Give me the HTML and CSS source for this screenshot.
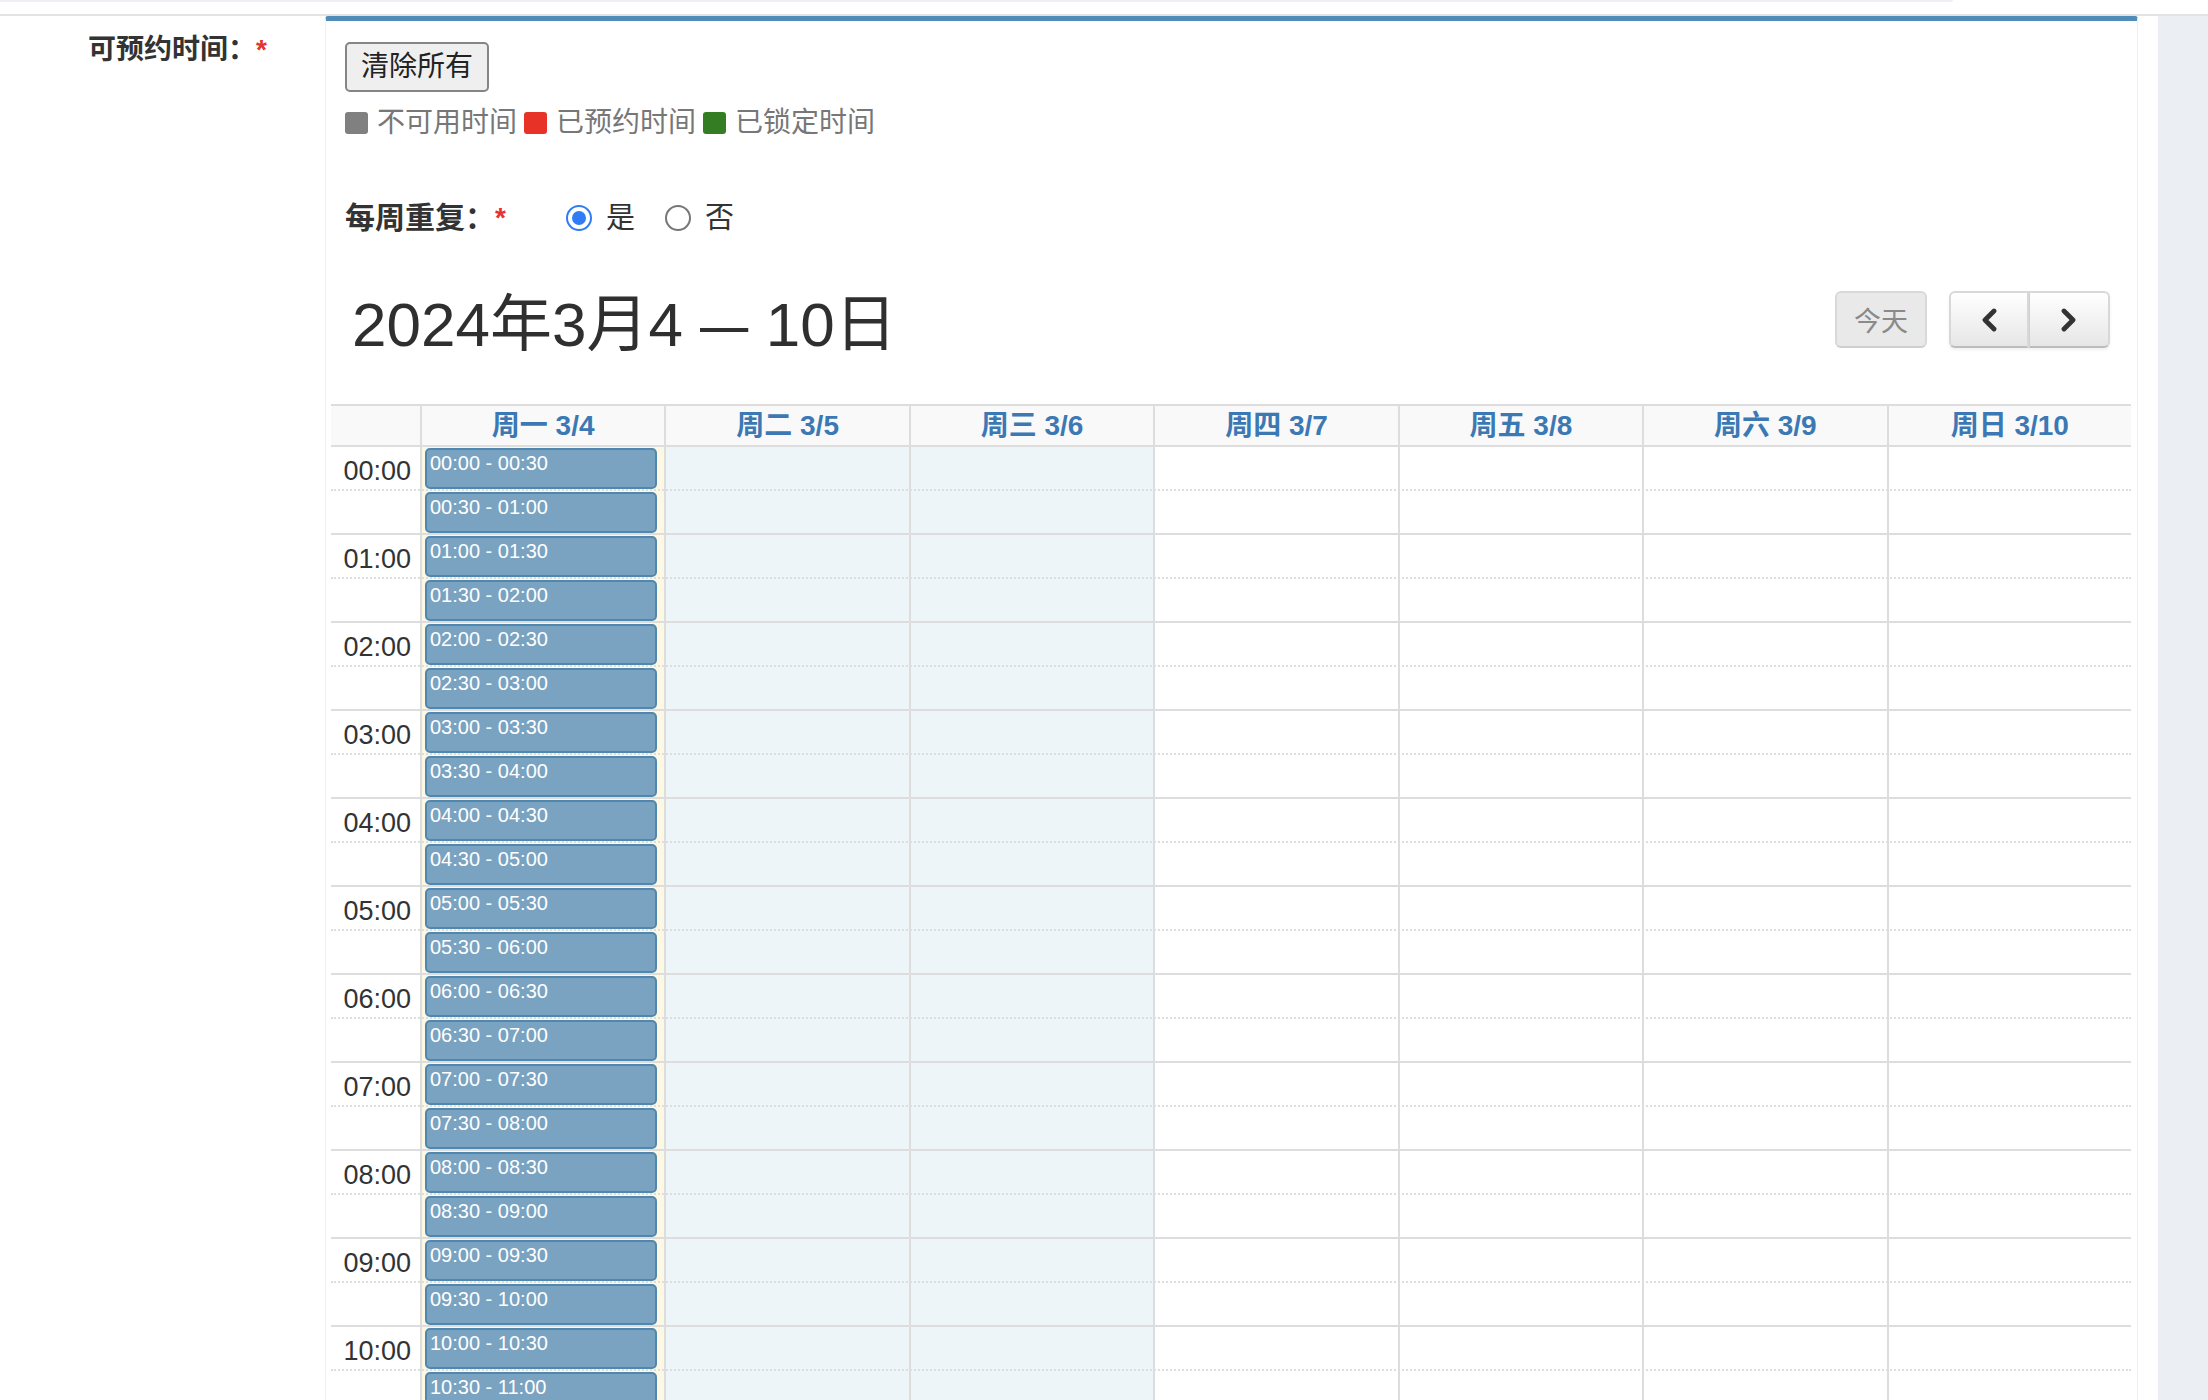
FILE: index.html
```html
<!DOCTYPE html>
<html lang="zh-CN">
<head>
<meta charset="utf-8">
<title>可预约时间</title>
<link rel="stylesheet" href="styles.css">
</head>
<body>
<div class="page">
  <div class="topband"></div>
  <div class="rule"></div>
  <div class="main">
    <div class="form-row">
      <div class="field-label">可预约时间：<span class="req">*</span></div>
      <div class="panel">
        <div class="controls">
          <button class="btn-clear" type="button">清除所有</button>
          <div class="legend">
            <span class="legend-item"><span class="swatch sw-gray"></span>不可用时间</span>
            <span class="legend-item"><span class="swatch sw-red"></span>已预约时间</span>
            <span class="legend-item"><span class="swatch sw-green"></span>已锁定时间</span>
          </div>
          <div class="repeat-row">
            <span class="repeat-label">每周重复：</span><span class="req req-sm">*</span>
            <label class="radio first"><span class="radio-dot checked"></span>是</label>
            <label class="radio"><span class="radio-dot"></span>否</label>
          </div>
        </div>

        <div class="calendar">
          <div class="toolbar">
            <h2 class="title">2024年3月4 <span class="dash">–</span> 10日</h2>
            <div class="tb-right">
              <button class="fc-btn today" type="button" disabled>今天</button>
              <div class="btn-group">
                <button class="fc-btn nav prev" type="button"><svg width="18" height="24" viewBox="0 0 18 24"><polyline points="14,3 5,12 14,21" fill="none" stroke="#333" stroke-width="4.8" stroke-linecap="round" stroke-linejoin="round"/></svg></button>
                <button class="fc-btn nav next" type="button"><svg width="18" height="24" viewBox="0 0 18 24"><polyline points="4,3 13,12 4,21" fill="none" stroke="#333" stroke-width="4.8" stroke-linecap="round" stroke-linejoin="round"/></svg></button>
              </div>
            </div>
          </div>

          <div class="grid">
            <div class="head">
              <div class="head-axis"></div>
              <div class="head-day">周一 3/4</div>
              <div class="head-day">周二 3/5</div>
              <div class="head-day">周三 3/6</div>
              <div class="head-day">周四 3/7</div>
              <div class="head-day">周五 3/8</div>
              <div class="head-day">周六 3/9</div>
              <div class="head-day">周日 3/10</div>
            </div>
            <div class="body">
              <div class="bg-cols">
                <div class="bg-axis"></div>
                <div class="bg-day today"></div>
                <div class="bg-day shaded"></div>
                <div class="bg-day shaded"></div>
                <div class="bg-day"></div>
                <div class="bg-day"></div>
                <div class="bg-day"></div>
                <div class="bg-day"></div>
              </div>
              <div class="slats">
                <div class="slat"><div class="slat-axis">00:00</div></div>
                <div class="slat half"><div class="slat-axis"></div></div>
                <div class="slat"><div class="slat-axis">01:00</div></div>
                <div class="slat half"><div class="slat-axis"></div></div>
                <div class="slat"><div class="slat-axis">02:00</div></div>
                <div class="slat half"><div class="slat-axis"></div></div>
                <div class="slat"><div class="slat-axis">03:00</div></div>
                <div class="slat half"><div class="slat-axis"></div></div>
                <div class="slat"><div class="slat-axis">04:00</div></div>
                <div class="slat half"><div class="slat-axis"></div></div>
                <div class="slat"><div class="slat-axis">05:00</div></div>
                <div class="slat half"><div class="slat-axis"></div></div>
                <div class="slat"><div class="slat-axis">06:00</div></div>
                <div class="slat half"><div class="slat-axis"></div></div>
                <div class="slat"><div class="slat-axis">07:00</div></div>
                <div class="slat half"><div class="slat-axis"></div></div>
                <div class="slat"><div class="slat-axis">08:00</div></div>
                <div class="slat half"><div class="slat-axis"></div></div>
                <div class="slat"><div class="slat-axis">09:00</div></div>
                <div class="slat half"><div class="slat-axis"></div></div>
                <div class="slat"><div class="slat-axis">10:00</div></div>
                <div class="slat half"><div class="slat-axis"></div></div>
                <div class="slat"><div class="slat-axis">11:00</div></div>
                <div class="slat half"><div class="slat-axis"></div></div>
              </div>
              <div class="ev-cols">
                <div class="ev-axis"></div>
                <div class="ev-col">
                  <div class="event">00:00 - 00:30</div>
                  <div class="event">00:30 - 01:00</div>
                  <div class="event">01:00 - 01:30</div>
                  <div class="event">01:30 - 02:00</div>
                  <div class="event">02:00 - 02:30</div>
                  <div class="event">02:30 - 03:00</div>
                  <div class="event">03:00 - 03:30</div>
                  <div class="event">03:30 - 04:00</div>
                  <div class="event">04:00 - 04:30</div>
                  <div class="event">04:30 - 05:00</div>
                  <div class="event">05:00 - 05:30</div>
                  <div class="event">05:30 - 06:00</div>
                  <div class="event">06:00 - 06:30</div>
                  <div class="event">06:30 - 07:00</div>
                  <div class="event">07:00 - 07:30</div>
                  <div class="event">07:30 - 08:00</div>
                  <div class="event">08:00 - 08:30</div>
                  <div class="event">08:30 - 09:00</div>
                  <div class="event">09:00 - 09:30</div>
                  <div class="event">09:30 - 10:00</div>
                  <div class="event">10:00 - 10:30</div>
                  <div class="event">10:30 - 11:00</div>
                  <div class="event">11:00 - 11:30</div>
                  <div class="event">11:30 - 12:00</div>
                </div>
              </div>
            </div>
          </div>
        </div>
      </div>
    </div>
    <div class="sidebar"></div>
  </div>
</div>
</body>
</html>
```

FILE: styles.css
```css
html, body {
  margin: 0;
  padding: 0;
  height: 1400px;
  overflow: hidden;
  background: #fff;
}
body {
  font-family: "Liberation Sans", "Noto Sans CJK SC", sans-serif;
  color: #333;
}
.page {
  width: 2208px;
  height: 1400px;
  overflow: hidden;
}
.topband {
  width: 1953px;
  height: 2px;
  background: #eceff3;
  border-bottom-right-radius: 3px;
}
.rule {
  margin-top: 12px;
  height: 2px;
  background: #e3e3e3;
}
.main {
  display: flex;
  height: 1384px;
}
.form-row {
  display: flex;
  width: 2158px;
  flex: none;
}
.sidebar {
  flex: 1;
  background: #ebeef3;
}
.field-label {
  width: 325px;
  flex: none;
  box-sizing: border-box;
  text-align: right;
  padding: 18px 58px 0 0;
  font-size: 28px;
  line-height: 32px;
  font-weight: bold;
  color: #333;
  white-space: nowrap;
}
.req {
  color: #e3342f;
  font-weight: bold;
}
.panel {
  width: 1813px;
  flex: none;
  box-sizing: border-box;
  border-top: 5px solid #508cb9;
  border-left: 1px solid #f1f1f1;
  border-right: 1px solid #f1f1f1;
  border-radius: 3px 3px 0 0;
  padding: 21px 6px 0 5px;
}
.controls {
  margin-left: 14px;
}
.btn-clear {
  display: block;
  height: 50px;
  padding: 0 14px;
  font-family: "Liberation Sans", "Noto Sans CJK SC", sans-serif;
  font-size: 28px;
  line-height: 30px;
  color: #222;
  background: #efefef;
  border: 2px solid #858585;
  border-radius: 5px;
}
.legend {
  margin-top: 16px;
  height: 30px;
  display: flex;
  align-items: center;
  font-size: 28px;
  line-height: 30px;
  color: #777;
}
.legend-item {
  display: inline-flex;
  align-items: center;
  gap: 9px;
  margin-right: 7px;
}
.swatch {
  width: 23px;
  height: 22px;
  border-radius: 3px;
  display: inline-block;
}
.sw-gray { background: #808080; }
.sw-red { background: #e73327; }
.sw-green { background: #357d22; }

.repeat-row {
  margin-top: 60px;
  height: 40px;
  display: flex;
  align-items: center;
  font-size: 29px;
  line-height: 40px;
  color: #333;
}
.repeat-label {
  font-size: 30px;
  font-weight: bold;
  white-space: nowrap;
}
.req-sm {
  font-size: 28px;
}
.radio {
  display: inline-flex;
  align-items: center;
  gap: 14px;
  margin-left: 30px;
}
.radio.first {
  margin-left: 60px;
}
.radio-dot {
  width: 26px;
  height: 26px;
  box-sizing: border-box;
  border: 2px solid #767676;
  border-radius: 50%;
  background: #fff;
  display: inline-flex;
  align-items: center;
  justify-content: center;
}
.radio-dot.checked {
  border-color: #2f7cf6;
}
.radio-dot.checked::after {
  content: "";
  width: 14px;
  height: 14px;
  border-radius: 50%;
  background: #2f7cf6;
}

.toolbar {
  margin-top: 53px;
  height: 57px;
  display: flex;
  justify-content: space-between;
  align-items: flex-start;
  padding: 0 21px 0 21px;
}
.title {
  margin: 4px 0 0;
  font-size: 62px;
  line-height: 60px;
  font-weight: normal;
  color: #2f2f2f;
  white-space: nowrap;
}
.dash {
  display: inline-block;
  margin: 0 7px;
  transform: scaleX(1.4);
}
.tb-right {
  display: flex;
  gap: 22px;
}
.fc-btn {
  height: 57px;
  box-sizing: border-box;
  font-family: "Liberation Sans", "Noto Sans CJK SC", sans-serif;
  padding: 0;
  margin: 0;
}
.fc-btn.today {
  width: 92px;
  font-size: 27px;
  color: #8a8a8a;
  background: #e9e9e9;
  border: 2px solid #d9d9d9;
  border-bottom-color: #cfcfcf;
  border-radius: 6px;
}
.btn-group {
  display: flex;
  border-radius: 6px;
  box-shadow: 0 2px 3px rgba(0, 0, 0, 0.06);
}
.fc-btn.nav {
  width: 80px;
  background: linear-gradient(#ffffff, #e6e6e6);
  border: 2px solid #d8d8d8;
  border-bottom-color: #bdbdbd;
  display: flex;
  align-items: center;
  justify-content: center;
}
.fc-btn.prev {
  border-radius: 6px 0 0 6px;
}
.fc-btn.next {
  width: 81px;
  border-left: 1px solid #d0d0d0;
  border-radius: 0 6px 6px 0;
}

.grid {
  margin-top: 56px;
}
.head {
  display: grid;
  grid-template-columns: 89px repeat(7, 1fr);
  height: 43px;
  box-sizing: border-box;
  border-top: 2px solid #dddddd;
  border-bottom: 2px solid #dddddd;
  background: #f9f9f9;
}
.head-day {
  border-left: 2px solid #dddddd;
  text-align: center;
  font-size: 28px;
  line-height: 39px;
  font-weight: bold;
  color: #3b78b4;
  white-space: nowrap;
}
.body {
  position: relative;
}
.bg-cols,
.ev-cols {
  position: absolute;
  top: 0;
  left: 0;
  right: 0;
  bottom: 0;
  display: grid;
  grid-template-columns: 89px repeat(7, 1fr);
}
.bg-day {
  border-left: 2px solid #dddddd;
}
.bg-day.today {
  background: #fcf8e3;
}
.bg-day.shaded {
  background: #edf5f8;
}
.slats {
  position: relative;
}
.slat {
  height: 44px;
  box-sizing: border-box;
  border-bottom: 2px dotted #dddddd;
  display: flex;
}
.slat.half {
  border-bottom-style: solid;
}
.slat-axis {
  width: 89px;
  box-sizing: border-box;
  text-align: right;
  padding: 4px 9px 0 0;
  font-size: 27px;
  line-height: 40px;
  color: #333;
}
.ev-cols {
  z-index: 2;
}
.ev-col {
  display: flex;
  flex-direction: column;
  gap: 3px;
  padding: 1px 7px 0 5px;
}
.event {
  height: 41px;
  flex: none;
  box-sizing: border-box;
  border: 2px solid #4f87ae;
  border-radius: 5px;
  background: #7aa3c1;
  color: #fff;
  font-size: 20px;
  line-height: 22px;
  padding: 2px 3px;
  white-space: nowrap;
  overflow: hidden;
}
```
